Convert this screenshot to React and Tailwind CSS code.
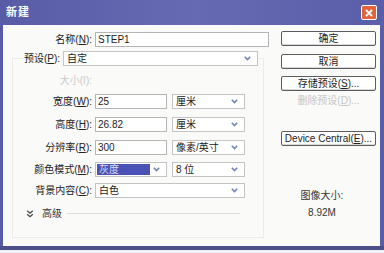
import React from 'react';

function Chevron() {
  return (
    <svg width="7" height="5" viewBox="0 0 7 5" className="shrink-0">
      <path d="M0.8 0.8 L3.5 3.6 L6.2 0.8" fill="none" stroke="#6f86b8" strokeWidth="1.6" />
    </svg>
  );
}

function Label({ children, width = 'w-[82px]', muted = false }) {
  return (
    <div className={`${width} shrink-0 whitespace-nowrap text-right pr-[3px] ${muted ? 'text-[#c9c9c9]' : 'text-[#222]'}`}>
      {children}
    </div>
  );
}

function TextBox({ value, width }) {
  return (
    <div className={`${width} h-[15px] border border-[#b4b4b4] bg-white px-[2px] leading-[13px] text-[#222]`}>
      {value}
    </div>
  );
}

function Select({ value, width, ml = '' }) {
  return (
    <div className={`${width} ${ml} h-[15px] border border-[#c4c4c4] bg-white pl-[3px] pr-[6px] flex items-center justify-between leading-[13px] text-[#222] whitespace-nowrap`}>
      <span>{value}</span>
      <Chevron />
    </div>
  );
}

function Button({ children, mt }) {
  return (
    <div className={`${mt} w-[95px] h-[15px] rounded-[2px] border border-[#5c5c5c] bg-white flex items-center justify-center leading-[13px] text-[#222] whitespace-nowrap shadow-[inset_0_-1px_0_#d8d8d8]`}>
      {children}
    </div>
  );
}

const U = ({ children }) => <span className="underline">{children}</span>;

export default function App() {
  return (
    <div className="w-[384px] h-[253px] bg-[#f2f2f2] font-['Liberation_Sans','Noto_Sans_CJK_SC',sans-serif] text-[10px]">
      <div className="w-[384px] h-[250px] flex flex-col bg-gradient-to-r from-[#585ca6] via-[#666ab3] to-[#5a5ea8]">
        {/* Title bar */}
        <div className="h-[25px] flex items-center justify-between pl-[6px] pr-[7px]">
          <span className="text-white font-bold text-[11px] tracking-[1px]">新建</span>
          <div className="w-[16px] h-[15px] rounded-[2px] border border-white bg-[#e2643c] flex items-center justify-center">
            <svg width="8" height="8" viewBox="0 0 8 8">
              <path d="M1 1 L7 7 M7 1 L1 7" stroke="white" strokeWidth="1.8" />
            </svg>
          </div>
        </div>

        {/* Client area */}
        <div className="flex-1 ml-[3px] mr-[4px] bg-[#fafaf8] flex">
          {/* Left column */}
          <div className="w-[269px] shrink-0">
            <div className="mt-[7px] h-[15px] flex items-center">
              <Label width="w-[92px]">名称(<U>N</U>):</Label>
              <TextBox value="STEP1" width="w-[174px]" />
            </div>

            <fieldset className="mt-[4px] ml-[9px] w-[252px] border border-[#ebebe9] pb-[16px]">
              <legend className="ml-[11px]">
                <div className="h-[15px] flex items-center bg-[#fafaf8]">
                  <div className="w-[38px] whitespace-nowrap text-[#222]">预设(<U>P</U>):</div>
                  <Select value="自定" width="w-[195px]" ml="ml-[1px]" />
                </div>
              </legend>

              <div className="mt-[7px] h-[15px] flex items-center">
                <Label muted>大小(I):</Label>
              </div>

              <div className="mt-[6px] h-[15px] flex items-center">
                <Label>宽度(<U>W</U>):</Label>
                <TextBox value="25" width="w-[72px]" />
                <Select value="厘米" width="w-[73px]" ml="ml-[5px]" />
              </div>

              <div className="mt-[8px] h-[15px] flex items-center">
                <Label>高度(<U>H</U>):</Label>
                <TextBox value="26.82" width="w-[72px]" />
                <Select value="厘米" width="w-[73px]" ml="ml-[5px]" />
              </div>

              <div className="mt-[8px] h-[15px] flex items-center">
                <Label>分辨率(<U>R</U>):</Label>
                <TextBox value="300" width="w-[72px]" />
                <Select value="像素/英寸" width="w-[73px]" ml="ml-[5px]" />
              </div>

              <div className="mt-[7px] h-[15px] flex items-center">
                <Label>颜色模式(<U>M</U>):</Label>
                <div className="w-[72px] h-[15px] border border-[#c4c4c4] bg-white pl-[1px] pr-[6px] flex items-center justify-between">
                  <span className="w-[53px] h-[11px] bg-[#4b52b6] text-[#d8dcf4] leading-[11px] pl-[2px]">灰度</span>
                  <Chevron />
                </div>
                <Select value="8 位" width="w-[73px]" ml="ml-[5px]" />
              </div>

              <div className="mt-[6px] h-[15px] flex items-center">
                <Label>背景内容(<U>C</U>):</Label>
                <Select value="白色" width="w-[150px]" />
              </div>

              <div className="mt-[8px] h-[15px] flex items-center pl-[13px]">
                <svg width="8" height="8" viewBox="0 0 8 8" className="shrink-0">
                  <path d="M1.2 0.8 L4 3.3 L6.8 0.8 M1.2 4.3 L4 6.8 L6.8 4.3" fill="none" stroke="#444" strokeWidth="1.2" />
                </svg>
                <span className="ml-[8px] text-[#333]">高级</span>
                <div className="ml-[5px] w-[173px] h-px bg-[#dcdcda]" />
              </div>
            </fieldset>
          </div>

          {/* Right column */}
          <div className="ml-[9px] w-[95px] flex flex-col">
            <Button mt="mt-[6px]">确定</Button>
            <Button mt="mt-[8px]">取消</Button>
            <Button mt="mt-[7px]">存储预设(<U>S</U>)...</Button>
            <div className="mt-[4px] h-[12px] leading-[12px] text-center text-[#c6c6c6] whitespace-nowrap">删除预设(<U>D</U>)...</div>
            <Button mt="mt-[24px]">Device Central(<U>E</U>)...</Button>
            <div className="mt-[44px] w-[82px] h-[12px] leading-[12px] text-center text-[#333]">图像大小:</div>
            <div className="mt-[5px] w-[82px] h-[12px] leading-[12px] text-center text-[#333]">8.92M</div>
          </div>
        </div>

        <div className="h-[4px] bg-[#4d4f8d]" />
      </div>
    </div>
  );
}
